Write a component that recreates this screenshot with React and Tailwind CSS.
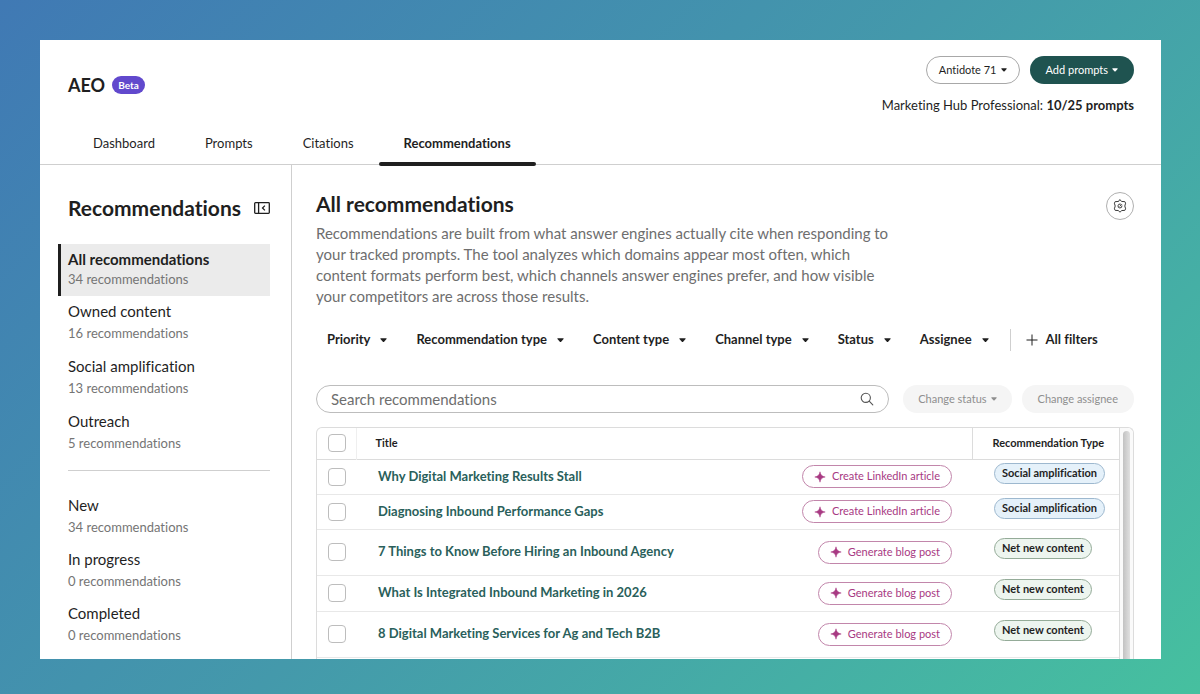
import { useState } from 'react';

const tabs = ['Dashboard', 'Prompts', 'Citations', 'Recommendations'];

const typeGroups = [
  { label: 'Owned content', count: 16 },
  { label: 'Social amplification', count: 13 },
  { label: 'Outreach', count: 5 },
];

const statusGroups = [
  { label: 'New', count: 34 },
  { label: 'In progress', count: 0 },
  { label: 'Completed', count: 0 },
];

const filters = ['Priority', 'Recommendation type', 'Content type', 'Channel type', 'Status', 'Assignee'];

const rows = [
  { title: 'Why Digital Marketing Results Stall', action: 'Create LinkedIn article', type: 'Social amplification', height: 'h-[35px]' },
  { title: 'Diagnosing Inbound Performance Gaps', action: 'Create LinkedIn article', type: 'Social amplification', height: 'h-[35px]' },
  { title: '7 Things to Know Before Hiring an Inbound Agency', action: 'Generate blog post', type: 'Net new content', height: 'h-[46px]' },
  { title: 'What Is Integrated Inbound Marketing in 2026', action: 'Generate blog post', type: 'Net new content', height: 'h-9' },
  { title: '8 Digital Marketing Services for Ag and Tech B2B', action: 'Generate blog post', type: 'Net new content', height: 'h-[46px]' },
];

function Caret({ className = 'w-[7px]' }) {
  return (
    <svg viewBox="0 0 8 5" className={`shrink-0 ${className}`} fill="currentColor" aria-hidden="true">
      <path d="M0.9 0.3h6.2c.5 0 .7.5.4.9L4.5 4.5c-.3.3-.7.3-1 0L.5 1.2C.2.8.4.3.9.3z" />
    </svg>
  );
}

function CollapseIcon() {
  return (
    <svg viewBox="0 0 16 12" className="w-4 h-3" fill="none" stroke="currentColor" strokeWidth="1.3" aria-hidden="true">
      <rect x="0.7" y="0.7" width="14.6" height="10.6" rx="0.8" />
      <path d="M4.6 0.7v10.6" />
      <path d="M10.9 3.6L8.5 6l2.4 2.4" />
    </svg>
  );
}

function GearIcon() {
  return (
    <svg viewBox="0 0 14 14" className="size-3.5" fill="none" stroke="currentColor" strokeWidth="1" strokeLinejoin="round" strokeLinecap="round" aria-hidden="true">
      <path d="M7 .8L8.800 2.500L11.800 2.600L12.600 4.200L11.800 7L12.600 9.800L11.800 11.400L8.800 11.500L7 13.200L5.200 11.500L2.200 11.400L1.400 9.800L2.200 7L1.400 4.200L2.200 2.600L5.200 2.500Z" />
      <path d="M7.400 5A2 2 0 1 0 9 7" />
      <path d="M7 7.100L8.600 5.500" />
    </svg>
  );
}

function SearchIcon() {
  return (
    <svg viewBox="0 0 14 14" className="size-3.5" fill="none" stroke="currentColor" strokeWidth="1.1" strokeLinecap="round" aria-hidden="true">
      <circle cx="5.8" cy="5.8" r="4.6" />
      <path d="M9.2 9.2L12.800 12.800" />
    </svg>
  );
}

function PlusIcon() {
  return (
    <svg viewBox="0 0 12 12" className="size-3" fill="none" stroke="currentColor" strokeWidth="1" aria-hidden="true">
      <path d="M6 0.500v11M0.500 6h11" />
    </svg>
  );
}

function SparkleIcon() {
  return (
    <svg viewBox="0 0 12 12" className="size-3" fill="currentColor" aria-hidden="true">
      <path d="M6 .8C6.600 4.100 7.900 5.400 11.200 6 7.900 6.600 6.600 7.900 6 11.200 5.400 7.900 4.100 6.600.8 6 4.100 5.400 5.400 4.100 6 .8z" stroke="currentColor" strokeWidth="0.5" strokeLinejoin="round" />
    </svg>
  );
}

function SidebarItem({ label, count }) {
  return (
    <li>
      <a href="#" className="block text-[15px] leading-[22px] text-[#1f1f1f]">
        {label}
        <span className="block text-[13px] text-[#757575]">{count} recommendations</span>
      </a>
    </li>
  );
}

function Checkbox({ label }) {
  return (
    <input
      type="checkbox"
      aria-label={label}
      className="block size-[18px] appearance-none rounded border border-[#bdbdbd] bg-white checked:bg-[#1f5350]"
    />
  );
}

function TypePill({ type }) {
  const color =
    type === 'Social amplification' ? 'bg-[#e5f1fa] border-[#9db8cf]' : 'bg-[#edf5ef] border-[#94ab98]';
  return (
    <span className={`flex h-[21px] w-fit items-center rounded-full border px-[7px] text-[11px] font-bold whitespace-nowrap text-[#1f1f1f] ${color}`}>
      {type}
    </span>
  );
}

function Header() {
  const [active, setActive] = useState('Recommendations');

  return (
    <header className="border-b border-[#cfcfcf]">
      <div className="flex items-start justify-between pt-4 pr-[27px] pl-7">
        <div className="mt-4 flex items-center gap-[7px]">
          <h1 className="text-[18px] leading-[26px] font-bold text-[#1f1f1f]">AEO</h1>
          <span className="flex h-[18px] items-center rounded-full bg-[#6149cd] px-1.5 text-[10px] font-bold text-white">Beta</span>
        </div>
        <div className="flex flex-col items-end">
          <div className="flex gap-2.5">
            <button type="button" className="flex h-7 items-center gap-1 rounded-full border border-[#a8a8a8] px-3 text-[11px] text-[#1f1f1f]">
              Antidote 71
              <Caret className="w-1.5" />
            </button>
            <button type="button" className="flex h-7 items-center gap-1 rounded-full bg-[#1f5350] px-4 text-[11px] text-white">
              Add prompts
              <Caret className="w-1.5" />
            </button>
          </div>
          <p className="mt-3 text-[13px] leading-[18px] text-[#1f1f1f]">
            Marketing Hub Professional: <strong className="font-bold">10/25 prompts</strong>
          </p>
        </div>
      </div>
      <nav className="mt-[19px] flex pl-7">
        {tabs.map((tab) => (
          <button
            key={tab}
            type="button"
            onClick={() => setActive(tab)}
            className={`relative px-[25px] pb-[11px] text-[13px] leading-5 text-[#1f1f1f] ${active === tab ? 'font-bold' : ''}`}
          >
            {tab}
            {active === tab && <span className="absolute inset-x-0 -bottom-0.5 h-1 rounded-sm bg-[#1f1f1f]" />}
          </button>
        ))}
      </nav>
    </header>
  );
}

function Sidebar() {
  return (
    <aside className="w-[252px] shrink-0 border-r border-[#cfcfcf] pr-[21px] pb-[13px] pl-[18px]">
      <div className="flex items-center justify-between pt-[29px] pl-2.5">
        <h2 className="text-[21px] leading-7 font-bold text-[#1f1f1f]">Recommendations</h2>
        <button type="button" aria-label="Collapse sidebar" className="text-[#1f1f1f]">
          <CollapseIcon />
        </button>
      </div>
      <a href="#" aria-current="page" className="mt-[22px] block border-l-[3px] border-[#1f1f1f] bg-[#ebebeb] pt-[5px] pb-[7px] pl-[7px] text-[15px] leading-5 font-bold text-[#1f1f1f]">
        All recommendations
        <span className="block text-[13px] font-normal text-[#757575]">34 recommendations</span>
      </a>
      <ul className="mt-1 flex flex-col gap-[11px] pl-2.5">
        {typeGroups.map((group) => (
          <SidebarItem key={group.label} {...group} />
        ))}
      </ul>
      <hr className="mt-4 mb-[23px] ml-2.5 border-[#cfcfcf]" />
      <ul className="flex flex-col gap-2.5 pl-2.5">
        {statusGroups.map((group) => (
          <SidebarItem key={group.label} {...group} />
        ))}
      </ul>
    </aside>
  );
}

function Filters() {
  return (
    <div className="mt-[22px] flex items-center pl-[11px] text-[13px] font-bold text-[#1f1f1f]">
      <div className="flex gap-[29px]">
        {filters.map((filter) => (
          <button key={filter} type="button" className="flex items-center gap-2.5 whitespace-nowrap">
            {filter}
            <Caret />
          </button>
        ))}
      </div>
      <div className="ml-[21px] h-[22px] border-l border-[#cfcfcf]" />
      <button type="button" className="ml-[15px] flex items-center gap-2 whitespace-nowrap">
        <PlusIcon />
        All filters
      </button>
    </div>
  );
}

function RecommendationTable() {
  return (
    <div className="mt-3.5 flex flex-1 rounded-t-md border border-b-0 border-[#dcdcdc]">
      <div className="flex-1">
        <table className="w-full border-collapse text-left">
          <thead>
            <tr className="h-[31px] border-b border-[#dcdcdc] text-[11px] text-[#1f1f1f]">
              <th className="w-[39px] border-r border-[#efefef] pl-[11px]">
                <Checkbox label="Select all recommendations" />
              </th>
              <th className="pl-[19px] font-bold">Title</th>
              <th className="w-[147px] border-l border-[#dcdcdc] pl-5 font-bold whitespace-nowrap">Recommendation Type</th>
            </tr>
          </thead>
          <tbody>
            {rows.map((row) => (
              <tr key={row.title} className={`border-b border-[#e8e8e8] ${row.height}`}>
                <td className="pl-[11px]">
                  <Checkbox label={`Select ${row.title}`} />
                </td>
                <td className="pr-5 pl-[22px]">
                  <div className="flex items-center justify-between">
                    <a href="#" className="text-[13px] font-bold text-[#2a5f5b]">{row.title}</a>
                    <button type="button" className="flex h-[23px] items-center gap-1.5 rounded-full border border-[#c286ab] px-[11px] text-[11px] text-[#a83a83]">
                      <SparkleIcon />
                      {row.action}
                    </button>
                  </div>
                </td>
                <td className="pb-[7px] pl-[22px]">
                  <TypePill type={row.type} />
                </td>
              </tr>
            ))}
          </tbody>
        </table>
      </div>
      <div className="w-3.5 shrink-0 rounded-tr-md border-l border-[#dcdcdc] bg-[#fafafa] px-[3px] pt-[3px]">
        <div className="h-full rounded-t-full bg-linear-to-r from-[#c2c2c2] to-[#e0e0e0]" />
      </div>
    </div>
  );
}

export default function App() {
  return (
    <div className="min-h-screen bg-linear-135 from-[#4079b4] via-[#4499ab] to-[#46c09f] pt-10 pr-[39px] pb-[35px] pl-10 font-['Lato','Noto_Sans',sans-serif] [font-variant-ligatures:no-common-ligatures]">
      <div className="bg-white">
        <Header />
        <div className="flex">
          <Sidebar />
          <main className="flex min-w-0 flex-1 flex-col pt-[26px] pr-[27px] pl-6">
            <div className="flex items-start justify-between">
              <div>
                <h2 className="text-[21px] leading-[26px] font-bold text-[#1f1f1f]">All recommendations</h2>
                <p className="mt-1.5 max-w-[580px] text-[15px] leading-[21px] text-[#6e6e6e]">
                  Recommendations are built from what answer engines actually cite when responding to your tracked
                  prompts. The tool analyzes which domains appear most often, which content formats perform best, which
                  channels answer engines prefer, and how visible your competitors are across those results.
                </p>
              </div>
              <button type="button" aria-label="Settings" className="mt-px flex size-7 items-center justify-center rounded-full border border-[#b0b0b0] text-[#3a3a3a]">
                <GearIcon />
              </button>
            </div>
            <Filters />
            <div className="mt-[34px] flex items-center gap-2.5">
              <div className="mr-1 flex h-7 flex-1 items-center rounded-full border border-[#bdbdbd] px-3.5 text-[#555555]">
                <input
                  type="text"
                  aria-label="Search recommendations"
                  placeholder="Search recommendations"
                  className="min-w-0 flex-1 text-[15px] outline-none placeholder:text-[#6e6e6e]"
                />
                <SearchIcon />
              </div>
              <button type="button" disabled className="flex h-7 items-center gap-1 rounded-full bg-[#f5f5f5] px-[15px] text-[11px] text-[#8f8f8f]">
                Change status
                <Caret className="w-1.5" />
              </button>
              <button type="button" disabled className="h-7 rounded-full bg-[#f5f5f5] px-4 text-[11px] text-[#8f8f8f]">
                Change assignee
              </button>
            </div>
            <RecommendationTable />
          </main>
        </div>
      </div>
    </div>
  );
}
